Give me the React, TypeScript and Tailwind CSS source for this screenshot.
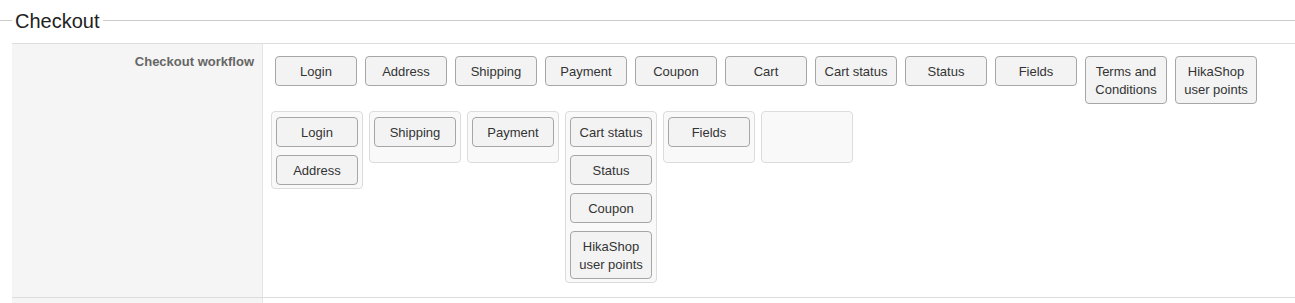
import React from "react";

const Btn = ({ label }: { label: React.ReactNode }) => (
  <div className="w-[82px] shrink-0 border border-[#a6a6a6] rounded-[4px] bg-[#f3f3f3] text-[13px] leading-[18px] text-[#333] text-center pt-[6px] pb-[4px]">
    {label}
  </div>
);

const Box = ({ items }: { items: React.ReactNode[] }) => (
  <div className="w-[92px] min-h-[52px] border border-[#dcdcdc] rounded-[4px] bg-[#f9f9f9] pt-[5px] pb-[3px] pl-[4px] flex flex-col gap-2">
    {items.map((it, i) => (
      <Btn key={i} label={it} />
    ))}
  </div>
);

export default function App() {
  const top: React.ReactNode[] = [
    "Login",
    "Address",
    "Shipping",
    "Payment",
    "Coupon",
    "Cart",
    "Cart status",
    "Status",
    "Fields",
    <>Terms and<br />Conditions</>,
    <>HikaShop<br />user points</>,
  ];
  return (
    <div className="w-[1295px] h-[303px] overflow-hidden bg-white font-['Liberation_Sans',Arial,sans-serif]">
      <div className="h-[41px] flex items-center">
        <div className="w-[12px] h-px bg-[#cccccc]" />
        <div className="px-[3px] text-[20px] leading-[24px] text-[#222]">Checkout</div>
        <div className="flex-1 h-px bg-[#cccccc]" />
      </div>
      <div className="mt-[2px] ml-[12px] border-t border-[#dddddd]">
        <div className="flex border-b border-[#dddddd]">
          <div className="w-[251px] shrink-0 bg-[#f5f5f5] border-r border-[#e5e5e5] text-right pr-[8px] pt-[9px] text-[13px] leading-[18px] font-bold text-[#666]">
            Checkout workflow
          </div>
          <div className="flex-1 pl-[8px] pb-[14px]">
            <div className="flex flex-wrap gap-2 pl-[4px] pt-[12px] items-start">
              {top.map((t, i) => (
                <Btn key={i} label={t} />
              ))}
            </div>
            <div className="flex gap-[6px] items-start mt-[7px]">
              <Box items={["Login", "Address"]} />
              <Box items={["Shipping"]} />
              <Box items={["Payment"]} />
              <Box items={["Cart status", "Status", "Coupon", <>HikaShop<br />user points</>]} />
              <Box items={["Fields"]} />
              <Box items={[]} />
            </div>
          </div>
        </div>
        <div className="flex h-[20px]">
          <div className="w-[251px] shrink-0 bg-[#f5f5f5] border-r border-[#e5e5e5]" />
          <div className="flex-1" />
        </div>
      </div>
    </div>
  );
}
